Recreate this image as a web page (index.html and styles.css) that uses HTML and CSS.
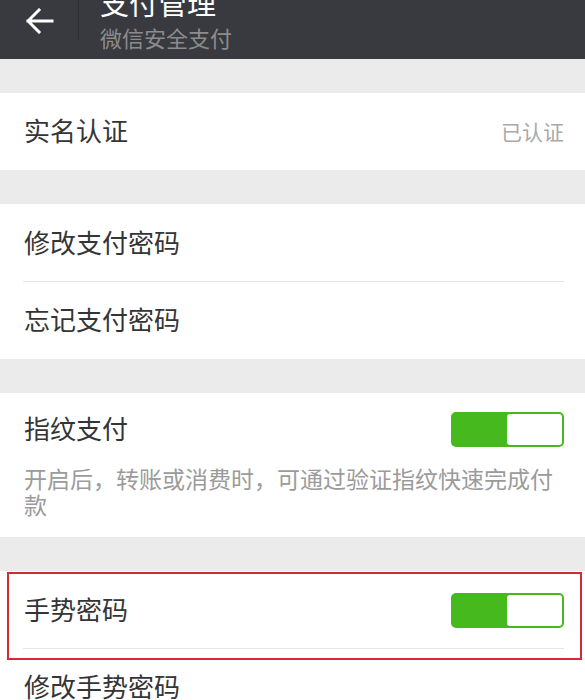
FILE: index.html
```html
<!DOCTYPE html>
<html lang="zh-CN">
<head>
    <meta charset="UTF-8">
    <meta name="viewport" content="width=device-width, initial-scale=1.0">
    <title>支付管理</title>
    <link rel="stylesheet" href="styles.css">
</head>
<body>
    <header class="bar">
        <a class="back" href="#">
            <svg width="28" height="26" viewBox="0 0 28 26">
                <path d="M2 13 H26 M13 2 L2 13 L13 24" fill="none" stroke="#fff" stroke-width="3" stroke-linecap="square"/>
            </svg>
        </a>
        <div class="divider"></div>
        <div class="titles">
            <h1>支付管理</h1>
            <p>微信安全支付</p>
        </div>
    </header>

    <main>
        <section class="group">
            <div class="row">
                <span class="label">实名认证</span>
                <span class="value">已认证</span>
            </div>
        </section>

        <section class="group">
            <div class="row line">
                <span class="label">修改支付密码</span>
            </div>
            <div class="row">
                <span class="label">忘记支付密码</span>
            </div>
        </section>

        <section class="group">
            <div class="row short">
                <span class="label">指纹支付</span>
                <span class="switch"><span class="knob"></span></span>
            </div>
            <p class="desc">开启后，转账或消费时，可通过验证指纹快速完成付款</p>
        </section>

        <section class="group">
            <div class="row line marked">
                <span class="label">手势密码</span>
                <span class="switch"><span class="knob"></span></span>
            </div>
            <div class="row">
                <span class="label">修改手势密码</span>
            </div>
        </section>
    </main>
</body>
</html>
```

FILE: styles.css
```css
body {
    margin: 0;
    padding: 0;
    background-color: #ebebeb;
    font-family: "Noto Sans CJK SC", "Noto Sans", sans-serif;
    color: #353535;
    overflow: hidden;
}
.bar {
    background-color: #393a3f;
    height: 59px;
    display: flex;
    align-items: flex-start;
    overflow: hidden;
}
.back {
    display: block;
    margin: 8px 0 0 26px;
    width: 28px;
    height: 26px;
}
.back svg {
    display: block;
}
.divider {
    width: 1px;
    height: 40px;
    background-color: #2b2c30;
    margin-left: 24px;
}
.titles {
    margin: -17px 0 0 21px;
}
.titles h1 {
    margin: 0;
    font-size: 29px;
    font-weight: normal;
    line-height: 38px;
    color: #fff;
}
.titles p {
    margin: 0;
    font-size: 22px;
    line-height: 32px;
    color: #8c8c8c;
}
main {
    padding-top: 34px;
}
.group {
    background-color: #fff;
    margin-bottom: 34px;
}
.row {
    height: 77px;
    display: flex;
    align-items: center;
    justify-content: space-between;
    padding: 0 21px 0 24px;
    font-size: 26px;
    position: relative;
}
.label {
    margin-bottom: 4px;
}
.row.line {
    height: 78px;
}
.row.line::before {
    content: "";
    position: absolute;
    left: 23px;
    right: 21px;
    bottom: 0;
    height: 1px;
    background-color: #e6e6e6;
}
.row.short {
    height: 72px;
}
.value {
    font-size: 21px;
    color: #a9a9a9;
    margin-bottom: 2px;
}
.switch {
    width: 113px;
    height: 35px;
    box-sizing: border-box;
    background-color: #46b91f;
    border: 2px solid #46b91f;
    border-radius: 5px;
    display: flex;
    justify-content: flex-end;
}
.knob {
    width: 55px;
    height: 100%;
    background-color: #fff;
    border-radius: 3px;
}
.desc {
    margin: 0;
    padding: 0 24px 20px 24px;
    font-size: 23px;
    line-height: 26px;
    color: #9b9b9b;
}
.marked::after {
    content: "";
    position: absolute;
    left: 7px;
    right: 3px;
    top: 1px;
    bottom: -11px;
    border: 2px solid #d42a35;
}
```
